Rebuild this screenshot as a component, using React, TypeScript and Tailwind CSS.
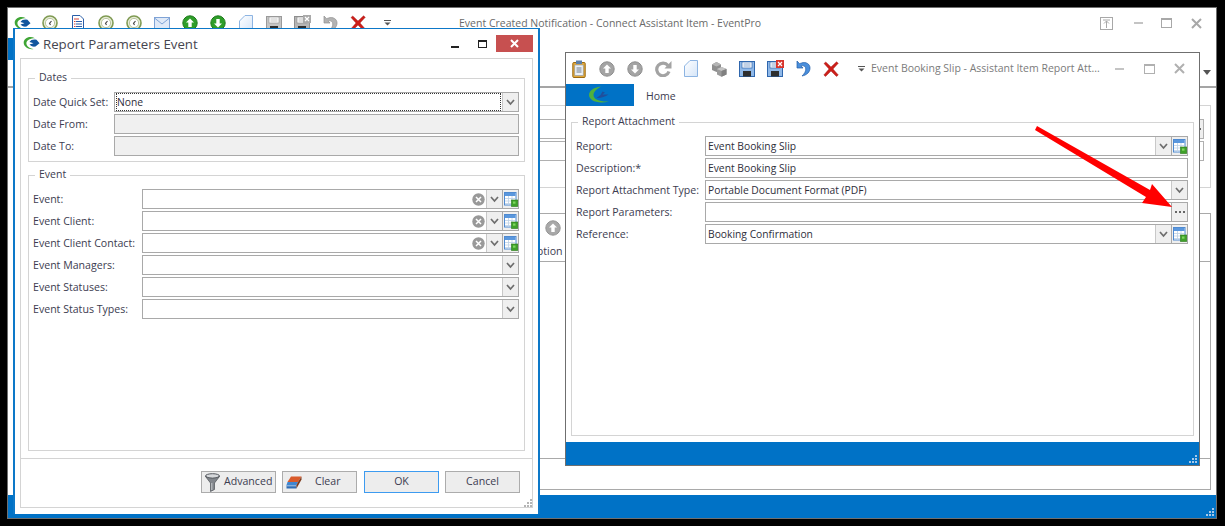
import React from "react";

const FONT = "font-['Open_Sans','Noto_Sans',sans-serif]";

function Clock() {
  return (
    <svg width="16" height="16" viewBox="0 0 16 16" className="block">
      <circle cx="8" cy="8" r="7" fill="#e8ecd8" stroke="#7f9a52" strokeWidth="1.6" />
      <circle cx="8" cy="8" r="4.6" fill="#fff" stroke="#a9b98c" strokeWidth="0.8" />
      <path d="M9.5 6 L7.5 8.3 L8.5 10" fill="none" stroke="#444" strokeWidth="1.1" />
    </svg>
  );
}
function Doc() {
  return (
    <svg width="16" height="17" viewBox="0 0 16 17" className="block">
      <path d="M2.5 .5H10L13.5 4V16.5H2.5Z" fill="#fff" stroke="#2b5ea8" />
      <path d="M4 4h5M4 6.500h1.500M4 9h1.500M4 11.500h1.500M4 14h1.500" stroke="#d6453a" strokeWidth="1" />
      <path d="M6 6.500h6M6 9h6M6 11.500h6M6 14h6" stroke="#2b5ea8" strokeWidth="1" />
    </svg>
  );
}
function Mail() {
  return (
    <svg width="16" height="14" viewBox="0 0 16 14" className="block">
      <rect x=".5" y="1.500" width="15" height="11" fill="#dfe9f7" stroke="#7fa3d6" />
      <path d="M.5 2L8 8l7.500-6" fill="none" stroke="#7fa3d6" />
    </svg>
  );
}
function Round({ color, ring, up }: { color: string; ring: string; up: boolean }) {
  return (
    <svg width="16" height="16" viewBox="0 0 16 16" className="block">
      <circle cx="8" cy="8" r="7.200" fill={color} stroke={ring} strokeWidth="1" />
      <path
        d={up ? "M8 3.500L12 7.500H9.700V12H6.300V7.500H4Z" : "M8 12.500L12 8.500H9.700V4H6.300V8.500H4Z"}
        fill="#fff"
      />
    </svg>
  );
}
function Page({ stroke = "#8db4e2" }: { stroke?: string }) {
  return (
    <svg width="14" height="17" viewBox="0 0 14 17" className="block">
      <defs>
        <linearGradient id="pg" x1="0" y1="0" x2="1" y2="1">
          <stop offset="0" stopColor="#fff" />
          <stop offset="1" stopColor="#d5e5f8" />
        </linearGradient>
      </defs>
      <path d="M.5 16.500V6L6 .5H13.500V16.500Z" fill="url(#pg)" stroke={stroke} />
    </svg>
  );
}
function Floppy({ body, dark, x }: { body: string; dark: string; x?: string }) {
  return (
    <svg width="17" height="17" viewBox="0 0 17 17" className="block">
      <rect x=".5" y="1.500" width="15" height="15" fill={body} stroke={dark} />
      <rect x="3" y="2" width="10" height="6" fill="#fff" stroke={dark} strokeWidth=".7" />
      <path d="M4.500 4h7M4.500 6h7" stroke={dark} strokeWidth=".6" />
      <rect x="4" y="11" width="8" height="5.500" fill="#2e2e2e" />
      {x && (
        <>
          <rect x="9" y="0" width="8" height="8" fill={x} />
          <path d="M11 2l4 4M15 2l-4 4" stroke="#fff" strokeWidth="1.200" />
        </>
      )}
    </svg>
  );
}
function Undo({ color, dark }: { color: string; dark: string }) {
  return (
    <svg width="15" height="17" viewBox="0 0 15 17" className="block">
      <path d="M1 1V8H7L5 5.800C7.500 5 9.800 6.500 9.800 9C9.800 11.500 8.500 13.500 6 16C11 15 14 12 14 8C14 4 10 1.500 5.500 3Q4.500 3.300 3.600 3.700Z" fill={color} stroke={dark} strokeWidth=".7" />
    </svg>
  );
}
function RedX({ size = 16 }: { size?: number }) {
  return (
    <svg width={size} height={size} viewBox="0 0 16 16" className="block">
      <path d="M1 2.500L2.800 1L8 6L13.500 .8L15.300 2.300L10 8L15.300 14L13.500 15.500L8 10L2.500 15.500L.8 14L6 8Z" fill="#cc1f1a" stroke="#9e1511" strokeWidth=".4" />
    </svg>
  );
}
function Clipboard() {
  return (
    <svg width="14" height="18" viewBox="0 0 14 18" className="block">
      <rect x=".8" y="2.500" width="12.400" height="15" rx="1" fill="#e2a93a" stroke="#9a6a12" />
      <rect x="2.800" y="5" width="8.400" height="10.500" fill="#eef2f7" stroke="#8896a8" strokeWidth=".6" />
      <rect x="4" y=".5" width="6" height="3.500" fill="#5c7fa8" />
      <path d="M4.500 8h5M4.500 10h5M4.500 12h5" stroke="#5c6d80" strokeWidth=".9" />
    </svg>
  );
}
function Refresh() {
  return (
    <svg width="17" height="17" viewBox="0 0 17 17" className="block">
      <path d="M13 5.500A6.300 6.300 0 1 0 14 11.500" fill="none" stroke="#a3a3a3" strokeWidth="3.200" />
      <path d="M16.500 1V8.500H9.500Z" fill="#a3a3a3" />
    </svg>
  );
}
function Cubes() {
  return (
    <svg width="16" height="16" viewBox="0 0 16 16" className="block">
      <path d="M1 3.500L5.500 1L10 3.500V9L5.500 11L1 9Z" fill="#8e8e8e" />
      <path d="M1 3.500L5.500 1L10 3.500L5.500 5.500Z" fill="#b5b5b5" />
      <path d="M6 8L10.500 6L15.500 8V13.500L10.500 15.800L6 13.500Z" fill="#9b9b9b" />
      <path d="M6 8L10.500 6L15.500 8L10.500 10Z" fill="#c4c4c4" />
      <path d="M10.500 10V15.800L15.500 13.500V8Z" fill="#808080" />
    </svg>
  );
}
function TableGreen() {
  return (
    <svg width="14" height="15" viewBox="0 0 14 15" className="block">
      <rect x=".5" y=".5" width="11.500" height="12.500" fill="#fff" stroke="#4f8ad0" />
      <rect x="1" y="1" width="10.500" height="3" fill="#5a97dd" />
      <path d="M1 6.500h10M1 9h10M1 11.500h10M4.500 4v9M8 4v9" stroke="#bcd0e6" strokeWidth=".8" />
      <rect x="7.500" y="8" width="6.200" height="6.500" fill="#3fa12a" stroke="#2a7a1a" strokeWidth=".6" />
      <rect x="9" y="9.500" width="2.500" height="2.200" fill="#7ed65f" />
    </svg>
  );
}
function Funnel() {
  return (
    <svg width="15" height="19" viewBox="0 0 15 19" className="block">
      <ellipse cx="7.500" cy="3" rx="7" ry="2.300" fill="#d7d9dc" stroke="#54585e" />
      <path d="M.5 3.500L5.500 10V18.500L9.500 16.500V10L14.500 3.500Q7.500 7 .5 3.500Z" fill="#82868c" stroke="#4d5156" strokeWidth=".7" />
      <path d="M6.800 10V17" stroke="#c7cacd" strokeWidth="1" />
    </svg>
  );
}
function Eraser() {
  return (
    <svg width="16" height="13" viewBox="0 0 16 13" className="block">
      <path d="M5 .5H15.500L12 6H1.500Z" fill="#d95a2b" />
      <path d="M1.500 6H12L10.500 9H.5Z" fill="#3f86d1" />
      <path d="M.5 9H10.500V12.500H.5Z" fill="#2f6cb4" />
      <path d="M.5 9.800H10" stroke="#cfe2f5" strokeWidth=".8" />
      <path d="M12 6L15.500 .5V3.500L10.500 12.500V9Z" fill="#7d3a1c" />
    </svg>
  );
}
function Logo() {
  return (
    <svg width="17" height="15" viewBox="0 0 17 15" className="block">
      <path d="M12 2.200C6 -.8 .5 2.500 .7 7C.9 11 6.500 14 10.500 13C6.500 12.300 3.200 10 3.400 7C3.600 4 7.500 2.300 12 2.200Z" fill="#3fa535" />
      <path d="M6.500 6C7.800 3.500 11 3 13.500 3.800L16.500 7.200L12.500 10.500C10 11 7.600 10 6.500 8.500L10.500 7.300Z" fill="#12569e" />
    </svg>
  );
}
function BlueLogo() {
  return (
    <svg width="24" height="19" viewBox="0 0 24 19" className="block">
      <path d="M13 .5C5 1.500 1 5 1 9C1 14 9 18.500 21 15.500C12 16 5.500 13.500 5.500 9C5.500 6 8.500 3 13 .5Z" fill="#4fb13d" />
      <path d="M8.500 12C12 12.500 17 11 20.500 8.500L14.500 8.500L17 6.500L14.500 5.500L12.500 9Z" fill="#1f4f9c" />
    </svg>
  );
}
function Chevron({ color = "#6d6d6d" }: { color?: string }) {
  return (
    <svg width="9" height="7" viewBox="0 0 9 7" className="block">
      <path d="M1 1L4.500 5L8 1" fill="none" stroke={color} strokeWidth="1.700" />
    </svg>
  );
}
function ClearCircle() {
  return (
    <svg width="13" height="13" viewBox="0 0 13 13" className="block">
      <circle cx="6.500" cy="6.500" r="6.200" fill="#999" />
      <path d="M4 4L9 9M9 4L4 9" stroke="#fff" strokeWidth="1.500" />
    </svg>
  );
}
function Dots() {
  return (
    <svg width="10" height="2" viewBox="0 0 10 2" className="block">
      <path d="M0 0h2v2h-2zM4 0h2v2h-2zM8 0h2v2h-2z" fill="#666" />
    </svg>
  );
}
function Grip({ color }: { color: string }) {
  return (
    <svg width="8" height="8" viewBox="0 0 8 8" className="block">
      <path d="M6 0h2v2h-2zM3 3h2v2h-2zM6 3h2v2h-2zM0 6h2v2h-2zM3 6h2v2h-2zM6 6h2v2h-2z" fill={color} />
    </svg>
  );
}
function MenuDrop({ color = "#555" }: { color?: string }) {
  return (
    <svg width="7" height="6" viewBox="0 0 7 6" className="block">
      <path d="M0 .5H7" stroke={color} />
      <path d="M.5 2.500H6.500L3.500 5.500Z" fill={color} />
    </svg>
  );
}
function WinMin({ color, w = "w-[9px]" }: { color: string; w?: string }) {
  return <div className={`h-[2px] ${w}`} style={{ background: color }} />;
}
function WinMax({ color, small }: { color: string; small?: boolean }) {
  return (
    <div
      className={`${small ? "h-[8px] w-[9px]" : "h-[10px] w-[11px]"} border border-t-2`}
      style={{ borderColor: color }}
    />
  );
}
function WinX({ color }: { color: string }) {
  return (
    <svg width="11" height="11" viewBox="0 0 11 11" className="block">
      <path d="M1 1L10 10M10 1L1 10" stroke={color} strokeWidth="2" />
    </svg>
  );
}
function Pin() {
  return (
    <svg width="13" height="13" viewBox="0 0 13 13" className="block">
      <rect x=".5" y=".5" width="12" height="12" fill="none" stroke="#a8a8a8" />
      <path d="M3 3h7M6.500 11V4M4 6.500L6.500 4L9 6.500" fill="none" stroke="#a8a8a8" />
    </svg>
  );
}

function Legend({ children, x }: { children: string; x: string }) {
  return <span className={`absolute -top-[10px] ${x} bg-white px-[4px] text-[10.5px] leading-[16px]`}>{children}</span>;
}

function Field({
  label,
  labelW,
  disabled,
  focused,
  value,
  clear,
  drop,
  table,
  dots,
}: {
  label: string;
  labelW: string;
  disabled?: boolean;
  focused?: boolean;
  value?: string;
  clear?: boolean;
  drop?: boolean;
  table?: boolean;
  dots?: boolean;
}) {
  return (
    <div className="flex h-[20px] items-center">
      <span className={`${labelW} shrink-0 whitespace-nowrap pt-[2px] text-[10.6px] text-[#3c3c50]`}>{label}</span>
      <div className={`flex h-full min-w-0 flex-1 items-stretch border border-[#a9a9a9] ${disabled ? "bg-[#f0f0f0]" : "bg-white"}`}>
        <div className="flex min-w-0 flex-1 items-center px-[2px]">
          <span
            className={`flex-1 whitespace-nowrap text-[10.3px] leading-[16px] text-[#2e2e3a] ${
              focused ? "outline-1 outline-dotted outline-[#333]" : ""
            }`}
          >
            {value}
          </span>
        </div>
        {clear && (
          <div className="flex w-[16px] items-center justify-center">
            <ClearCircle />
          </div>
        )}
        {drop && (
          <div className="flex w-[16px] items-center justify-center border-l border-[#c8c8c8] bg-[#efefef]">
            <Chevron />
          </div>
        )}
        {table && (
          <div className="flex w-[16px] items-center justify-center border-l border-[#a9a9a9] bg-[#efefef]">
            <TableGreen />
          </div>
        )}
        {dots && (
          <div className="flex w-[16px] items-center justify-center border-l border-[#a9a9a9] bg-[#efefef]">
            <Dots />
          </div>
        )}
      </div>
    </div>
  );
}

function Btn({ children, primary }: { children: React.ReactNode; primary?: boolean }) {
  return (
    <div
      className={`flex h-[22px] w-[75px] items-center bg-[#ededed] text-[10.6px] text-[#3c3c50] border ${
        primary ? "border-[#3d9bf0]" : "border-[#acacac]"
      }`}
    >
      {children}
    </div>
  );
}

const mainTools = [
  <Logo key="0" />,
  <Clock key="1" />,
  <Doc key="2" />,
  <Clock key="3" />,
  <Clock key="4" />,
  <Mail key="5" />,
  <Round key="6" color="#2f9e2a" ring="#1e7a1c" up />,
  <Round key="7" color="#2f9e2a" ring="#1e7a1c" up={false} />,
  <Page key="8" />,
  <Floppy key="9" body="#c4c4c4" dark="#9a9a9a" />,
  <Floppy key="10" body="#b5b5b5" dark="#8f8f8f" x="#a9a9a9" />,
  <Undo key="11" color="#b3b3b3" dark="#8f8f8f" />,
  <RedX key="12" />,
];

const innerTools = [
  <Clipboard key="0" />,
  <Round key="1" color="#a4a4a4" ring="#8e8e8e" up />,
  <Round key="2" color="#a4a4a4" ring="#8e8e8e" up={false} />,
  <Refresh key="3" />,
  <Page key="4" />,
  <Cubes key="5" />,
  <Floppy key="6" body="#8fb8e8" dark="#2f66ad" />,
  <Floppy key="7" body="#8fb8e8" dark="#2f66ad" x="#d8342c" />,
  <Undo key="8" color="#4a8fdc" dark="#1f5ca8" />,
  <RedX key="9" />,
];

export default function App() {
  return (
    <div className={`relative h-[526px] w-[1225px] overflow-hidden bg-black ${FONT}`}>
      {/* Main window */}
      <div className="absolute left-[7px] top-[7px] flex h-[512px] w-[1210px] flex-col border border-[#6f6f6f] bg-white text-[#3c3c50]">
        <div className="flex h-[30px] shrink-0 items-center">
          <div className="flex">
            {mainTools.map((t, i) => (
              <div key={i} className="flex w-[28px] shrink-0 items-center justify-center">
                {t}
              </div>
            ))}
          </div>
          <div className="ml-[12px]">
            <MenuDrop />
          </div>
          <span className="ml-[68px] whitespace-nowrap pt-[2px] text-[10.5px] text-[#6a6a6a]">
            Event Created Notification - Connect Assistant Item - EventPro
          </span>
          <div className="ml-auto flex items-center">
            <Pin />
            <div className="ml-[21px] w-[9px]">
              <WinMin color="#c4c4c4" />
            </div>
            <div className="ml-[18px]">
              <WinMax color="#a8a8a8" />
            </div>
            <div className="ml-[19px] mr-[14px]">
              <WinX color="#a8a8a8" />
            </div>
          </div>
        </div>
        <div className="relative h-[50px] shrink-0 border-b-2 border-[#a5a5a5]">
          <div className="h-[22px] w-[68px] bg-[#0072c6]" />
          <div className="absolute right-[5px] top-[32px] h-0 w-0 border-x-[4px] border-t-[5px] border-x-transparent border-t-[#555]" />
        </div>
        <div className="flex min-h-0 flex-1 flex-col px-[5px] pt-[17px]">
          <div className="h-[83px] shrink-0 border border-[#d4d4d4] px-[6px] pt-[13px]">
            <div className="flex h-[20px] justify-end border border-[#b0b0b0]">
              <div className="flex w-[16px] items-center justify-center border-l border-[#b0b0b0] bg-[#efefef]">
                <Dots />
              </div>
            </div>
            <div className="mt-[2px] h-[20px] border border-[#b0b0b0]" />
          </div>
          <div className="mt-[25px] flex h-[277px] shrink-0 flex-col border border-[#a9a9a9]">
            <div className="relative h-[48px] shrink-0 border-b border-[#a9a9a9]">
              <div className="absolute left-[531px] top-[6px]">
                <Round color="#a8a8a8" ring="#969696" up />
              </div>
              <span className="absolute left-[492px] top-[30px] whitespace-nowrap text-[10.6px] text-[#3c3c50]">
                Description
              </span>
            </div>
            <div className="flex-1" />
            <div className="h-[31px] shrink-0 border-t border-[#a9a9a9]" />
          </div>
        </div>
        <div className="relative h-[23px] shrink-0 bg-[#0072c6]">
          <div className="absolute bottom-[2px] right-[2px]">
            <Grip color="#a8c8e8" />
          </div>
        </div>
      </div>

      {/* Event Booking Slip window */}
      <div className="absolute left-[565px] top-[52px] flex h-[414px] w-[635px] flex-col border border-[#6f6f6f] bg-white">
        <div className="flex h-[31px] shrink-0 items-center">
          <div className="-ml-[1px] flex">
            {innerTools.map((t, i) => (
              <div key={i} className="flex w-[28px] shrink-0 items-center justify-center">
                {t}
              </div>
            ))}
          </div>
          <div className="ml-[13px]">
            <MenuDrop />
          </div>
          <span className="ml-[6px] whitespace-nowrap text-[10.5px] text-[#7b7b7b]">
            Event Booking Slip - Assistant Item Report Att...
          </span>
          <div className="ml-auto flex items-center">
            <WinMin color="#c4c4c4" />
            <div className="ml-[20px]">
              <WinMax color="#b0b0b0" />
            </div>
            <div className="ml-[19px] mr-[14px]">
              <WinX color="#b0b0b0" />
            </div>
          </div>
        </div>
        <div className="flex h-[22px] shrink-0 items-center">
          <div className="flex h-full w-[68px] items-center justify-center bg-[#0072c6]">
            <BlueLogo />
          </div>
          <span className="ml-[12px] pt-[4px] text-[10.5px] text-[#3c3c50]">Home</span>
        </div>
        <div className="min-h-0 flex-1 px-[5px] pb-[6px] pt-[16px]">
          <div className="relative h-full border border-[#d4d4d4] pl-[4px] pr-[5px] pt-[13px] text-[#3c3c50]">
            <Legend x="left-[6px]">Report Attachment</Legend>
            <div className="flex flex-col gap-[2px]">
              <Field label="Report:" labelW="w-[129px]" value="Event Booking Slip" drop table />
              <Field label="Description:*" labelW="w-[129px]" value="Event Booking Slip" />
              <Field label="Report Attachment Type:" labelW="w-[129px]" value="Portable Document Format (PDF)" drop />
              <Field label="Report Parameters:" labelW="w-[129px]" dots />
              <Field label="Reference:" labelW="w-[129px]" value="Booking Confirmation" drop table />
            </div>
          </div>
        </div>
        <div className="relative h-[23px] shrink-0 bg-[#0072c6]">
          <div className="absolute bottom-[2px] right-[2px]">
            <Grip color="#a8c8e8" />
          </div>
        </div>
      </div>

      {/* Arrow annotation */}
      <svg width="150" height="90" viewBox="0 0 150 90" className="absolute left-[1030px] top-[122px]">
        <path d="M7 4L5 8L116 75L112 81L142 85L122 62L120 68Z" fill="#ff0000" />
      </svg>

      {/* Report Parameters Event dialog */}
      <div className="absolute left-[13px] top-[28px] flex h-[486px] w-[527px] flex-col border-x-2 border-t border-b-0 border-[#0d78c8] bg-white px-[5px] pb-[6px] text-[#3c3c50]">
        <div className="flex h-[29px] shrink-0 items-center">
          <div className="ml-[3px]">
            <Logo />
          </div>
          <span className="ml-[3px] whitespace-nowrap pt-[2px] text-[13.25px] leading-none text-[#45454f]">
            Report Parameters Event
          </span>
          <div className="ml-auto flex items-center">
            <div className="mt-[6px]">
              <WinMin color="#222" w="w-[8px]" />
            </div>
            <div className="ml-[19px]">
              <WinMax color="#222" small />
            </div>
            <div className="ml-[9px] flex h-[17px] w-[37px] items-center justify-center bg-[#c75050]">
              <svg width="9" height="9" viewBox="0 0 9 9" className="block">
                <path d="M1 1L8 8M8 1L1 8" stroke="#fff" strokeWidth="2" />
              </svg>
            </div>
          </div>
        </div>
        <div className="flex min-h-0 flex-1 flex-col border border-[#d4d4d4]">
          <div className="flex min-h-0 flex-1 flex-col px-[7px] pt-[19px]">
            <div className="relative h-[84px] shrink-0 border border-[#d4d4d4] pl-[4px] pr-[5px] pt-[13px]">
              <Legend x="left-[6px]">Dates</Legend>
              <div className="flex flex-col gap-[2px]">
                <Field label="Date Quick Set:" labelW="w-[81px]" value="None" focused drop />
                <Field label="Date From:" labelW="w-[81px]" disabled />
                <Field label="Date To:" labelW="w-[81px]" disabled />
              </div>
            </div>
            <div className="relative mt-[13px] h-[276px] shrink-0 border border-[#d4d4d4] pl-[4px] pr-[5px] pt-[13px]">
              <Legend x="left-[6px]">Event</Legend>
              <div className="flex flex-col gap-[2px]">
                <Field label="Event:" labelW="w-[109px]" clear drop table />
                <Field label="Event Client:" labelW="w-[109px]" clear drop table />
                <Field label="Event Client Contact:" labelW="w-[109px]" clear drop table />
                <Field label="Event Managers:" labelW="w-[109px]" drop />
                <Field label="Event Statuses:" labelW="w-[109px]" drop />
                <Field label="Event Status Types:" labelW="w-[109px]" drop />
              </div>
            </div>
          </div>
          <div className="relative flex h-[49px] shrink-0 items-start justify-end gap-[6px] border-t border-[#d4d4d4] pr-[12px] pt-[12px]">
            <Btn>
              <span className="ml-[3px]">
                <Funnel />
              </span>
              <span className="ml-[4px]">Advanced</span>
            </Btn>
            <Btn>
              <span className="ml-[3px]">
                <Eraser />
              </span>
              <span className="ml-[13px]">Clear</span>
            </Btn>
            <div className="ml-[1px]">
              <Btn primary>
                <span className="w-full text-center">OK</span>
              </Btn>
            </div>
            <Btn>
              <span className="w-full text-center">Cancel</span>
            </Btn>
            <div className="absolute bottom-[0px] right-[0px]">
              <Grip color="#b5b5b5" />
            </div>
          </div>
        </div>
      </div>
    </div>
  );
}
